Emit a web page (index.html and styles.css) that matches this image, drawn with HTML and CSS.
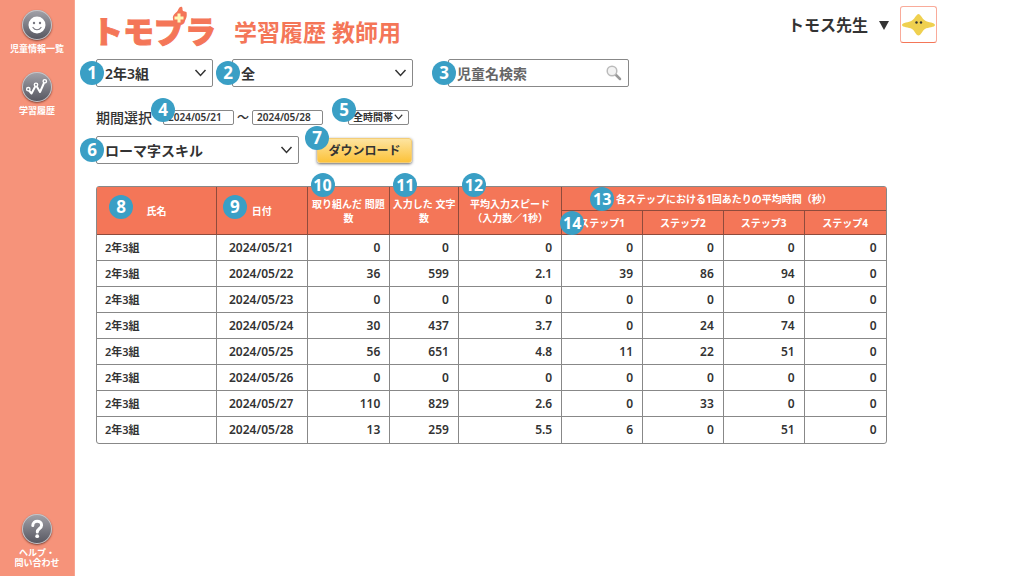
FILE: index.html
```html
<!DOCTYPE html>
<html lang="ja">

<head>
    <meta charset="utf-8">
    <title>トモプラ 学習履歴 教師用</title>
    <link rel="stylesheet" href="styles.css">
</head>

<body>
    <nav class="sidebar">
        <div class="menu">
            <a href="#" class="menu-item">
                <span class="menu-icon">
                    <svg width="30" height="30" viewBox="0 0 30 30">
                        <circle cx="15" cy="15" r="8.5" fill="#fff" />
                        <circle cx="12" cy="13" r="1.2" fill="#777780" />
                        <circle cx="18" cy="13" r="1.2" fill="#777780" />
                        <path d="M11 17.5c2 3 6 3 8 0" fill="none" stroke="#777780" stroke-width="1.2" stroke-linecap="round" />
                    </svg>
                </span>
                児童情報一覧
            </a>
            <a href="#" class="menu-item">
                <span class="menu-icon">
                    <svg width="30" height="30" viewBox="0 0 30 30" fill="none" stroke="#fff" stroke-width="1.4">
                        <path d="M7 18.5L9.5 21.5L13.2 14.5M14.8 14.5L18 20L22 11" stroke-width="2" stroke-linejoin="round" />
                        <circle cx="6.3" cy="17.2" r="1.7" />
                        <circle cx="14" cy="12.8" r="1.7" />
                        <circle cx="22.8" cy="9.3" r="1.7" />
                    </svg>
                </span>
                学習履歴
            </a>
        </div>
        <a href="#" class="menu-item menu-help">
            <span class="menu-icon">
                <svg width="30" height="30" viewBox="0 0 30 30">
                    <path d="M10.8 11.5c0-5.8 8.8-5.6 8.800-.3c0 3.300-4.300 3.300-4.300 6.800" fill="none" stroke="#fff" stroke-width="3" stroke-linecap="round" />
                    <circle cx="15.2" cy="22.2" r="1.9" fill="#fff" />
                </svg>
            </span>
            <span class="menu-line">ヘルプ・</span>
            <span class="menu-line">問い合わせ</span>
        </a>
    </nav>

    <main class="main">
        <header class="header">
            <div class="logo">トモプラ
                <svg class="logo-flame" width="16" height="20" viewBox="0 0 16 20">
                    <path d="M1 13C0 8 5 7 6 4C7 1 9 0 10 1C11 2 10 4 11 5L14.500 6C15.500 11 13.500 14 11.500 17C8 20 1 18 1 13Z" fill="#f47658" />
                    <path d="M5.500 7.500h3v3h3v3h-3v3h-3v-3h-3v-3h3Z" fill="#fff9b8" />
                </svg>
            </div>
            <h1 class="title">学習履歴 教師用</h1>
            <button type="button" class="user">トモス先生 <span class="user-arrow"></span></button>
            <a href="#" class="avatar" aria-label="プロフィール">
                <svg width="35" height="35" viewBox="0 0 35 35">
                    <path d="M17.500 7C19.500 7 20.500 11 24 13.500C27 15.500 34 15.500 34 18C34 20.500 27 20 24 22C21 24 20 28.500 17.500 28.500C15 28.500 14 24 11 22C8 20 1 20.500 1 18C1 15.500 8 15.500 11 13.500C14.500 11 15.500 7 17.500 7Z" fill="#efd04f" />
                    <circle cx="15.500" cy="15.500" r="1.200" fill="#333" />
                    <circle cx="20" cy="15.500" r="1.200" fill="#333" />
                </svg>
            </a>
        </header>

        <div class="row filters">
            <div class="field field-class">
                <select class="box" aria-label="クラス">
                    <option>2年3組</option>
                </select>
                <span class="badge">1</span>
            </div>
            <div class="field field-wide">
                <select class="box" aria-label="児童">
                    <option>全</option>
                </select>
                <span class="badge">2</span>
            </div>
            <div class="field field-wide field-search">
                <input type="search" class="box" placeholder="児童名検索" aria-label="児童名検索">
                <svg class="search-icon" width="16" height="16" viewBox="0 0 16 16" fill="none">
                    <path d="M9.500 9.500L14 14" stroke="#999" stroke-width="2.500" stroke-linecap="round" />
                    <circle cx="6" cy="6" r="4.800" fill="#f3f3f3" stroke="#bbb" stroke-width="1.500" />
                </svg>
                <span class="badge">3</span>
            </div>
        </div>

        <div class="row period">
            <label for="from">期間選択</label>
            <div class="field field-date">
                <input type="text" id="from" class="box box-small" value="2024/05/21">
                <span class="badge badge-raised">4</span>
            </div>
            <span class="tilde">～</span>
            <div class="field field-date">
                <input type="text" class="box box-small" value="2024/05/28" aria-label="終了日">
            </div>
            <div class="field field-time">
                <select class="box box-small" aria-label="時間帯">
                    <option>全時間帯</option>
                </select>
                <span class="badge badge-time">5</span>
            </div>
        </div>

        <div class="row skills">
            <div class="field field-skill">
                <select class="box" aria-label="スキル">
                    <option>ローマ字スキル</option>
                </select>
                <span class="badge">6</span>
            </div>
            <div class="field field-download">
                <button type="button" class="download">ダウンロード</button>
                <span class="badge badge-raised">7</span>
            </div>
        </div>

        <table class="history">
            <colgroup>
                <col class="col-name">
                <col class="col-date">
                <col class="col-count">
                <col class="col-chars">
                <col class="col-speed">
                <col class="col-step" span="4">
            </colgroup>
            <thead>
                <tr>
                    <th rowspan="2">氏名<span class="badge badge-inside">8</span></th>
                    <th rowspan="2">日付<span class="badge badge-inside-left">9</span></th>
                    <th rowspan="2">取り組んだ 問題数<span class="badge badge-top">10</span></th>
                    <th rowspan="2">入力した 文字数<span class="badge badge-top">11</span></th>
                    <th rowspan="2">平均入力スピード<br>（入力数／1秒）<span class="badge badge-top">12</span></th>
                    <th colspan="4">各ステップにおける1回あたりの平均時間（秒）<span class="badge badge-group">13</span></th>
                </tr>
                <tr>
                    <th>ステップ1<span class="badge badge-step">14</span></th>
                    <th>ステップ2</th>
                    <th>ステップ3</th>
                    <th>ステップ4</th>
                </tr>
            </thead>
            <tbody>
                <tr><td>2年3組</td><td>2024/05/21</td><td>0</td><td>0</td><td>0</td><td>0</td><td>0</td><td>0</td><td>0</td></tr>
                <tr><td>2年3組</td><td>2024/05/22</td><td>36</td><td>599</td><td>2.1</td><td>39</td><td>86</td><td>94</td><td>0</td></tr>
                <tr><td>2年3組</td><td>2024/05/23</td><td>0</td><td>0</td><td>0</td><td>0</td><td>0</td><td>0</td><td>0</td></tr>
                <tr><td>2年3組</td><td>2024/05/24</td><td>30</td><td>437</td><td>3.7</td><td>0</td><td>24</td><td>74</td><td>0</td></tr>
                <tr><td>2年3組</td><td>2024/05/25</td><td>56</td><td>651</td><td>4.8</td><td>11</td><td>22</td><td>51</td><td>0</td></tr>
                <tr><td>2年3組</td><td>2024/05/26</td><td>0</td><td>0</td><td>0</td><td>0</td><td>0</td><td>0</td><td>0</td></tr>
                <tr><td>2年3組</td><td>2024/05/27</td><td>110</td><td>829</td><td>2.6</td><td>0</td><td>33</td><td>0</td><td>0</td></tr>
                <tr><td>2年3組</td><td>2024/05/28</td><td>13</td><td>259</td><td>5.5</td><td>6</td><td>0</td><td>51</td><td>0</td></tr>
            </tbody>
        </table>
    </main>
</body>

</html>
```

FILE: styles.css
```css
* {
    box-sizing: border-box;
}

body {
    display: flex;
    min-height: 100vh;
    margin: 0;
    background: #fff;
    color: #333;
    font-family: "Noto Sans", "Noto Sans CJK JP", sans-serif;
    font-size: 14px;
    font-weight: 600;
}

button,
input,
select {
    font-family: inherit;
    font-weight: inherit;
    color: inherit;
}

/* サイドバー */
.sidebar {
    display: flex;
    flex-direction: column;
    justify-content: space-between;
    flex: 0 0 75px;
    padding: 10px 0 8px;
    background: #f6937a;
    border-right: 1px solid #f8a48f;
}

.menu {
    display: flex;
    flex-direction: column;
    gap: 18px;
}

.menu-item {
    display: block;
    color: #fff;
    font-size: 9px;
    font-weight: 700;
    line-height: 10px;
    text-align: center;
    text-decoration: none;
    white-space: nowrap;
}

.menu-help {
    font-family: "Noto Sans CJK JP", sans-serif;
}

.menu-line {
    display: block;
}

.menu-icon {
    display: block;
    width: 30px;
    height: 30px;
    margin: 0 auto 4px;
    border-radius: 50%;
    background: linear-gradient(#a3a3aa, #55555f);
    box-shadow: inset 0 0 0 1px #c9c4c6, 0 1px 2px rgba(80, 30, 20, .7);
}

/* ヘッダー */
.main {
    flex: 1;
    min-width: 0;
    padding: 6px 87px 20px 21px;
}

.header {
    display: flex;
    align-items: flex-start;
    height: 45px;
}

.logo {
    position: relative;
    margin: 6px 0 0 -4px;
    color: #f47658;
    font-family: "Noto Sans CJK JP", sans-serif;
    font-size: 31px;
    font-weight: 900;
    line-height: 36px;
    white-space: nowrap;
    -webkit-text-stroke: 1px #f47658;
}

.logo-flame {
    position: absolute;
    top: -6px;
    left: 80px;
}

.title {
    margin: 7px 0 0 18px;
    color: #f47658;
    font-size: 23px;
    font-weight: 700;
    line-height: 38px;
    white-space: nowrap;
}

.user {
    display: flex;
    align-items: center;
    gap: 11px;
    margin-left: auto;
    padding: 0;
    border: 0;
    background: none;
    font-size: 16px;
    line-height: 38px;
    white-space: nowrap;
}

.user-arrow {
    border: 5px solid transparent;
    border-top: 9px solid #333;
    border-bottom: 0;
}

.avatar {
    height: 37px;
    margin-left: 11px;
    border: 1px solid #f9ab9a;
    border-bottom-color: #f47658;
    border-radius: 3px;
}

.avatar svg {
    display: block;
}

/* 検索条件 */
.row {
    display: flex;
    align-items: center;
}

.filters {
    gap: 19px;
    margin-top: 8px;
}

.field {
    position: relative;
}

.field-class {
    width: 117px;
}

.field-wide {
    width: 181px;
}

.field-search {
    margin-left: 16px;
}

.box {
    display: block;
    width: 100%;
    height: 28px;
    margin: 0;
    padding: 0 8px;
    border: 1px solid #888;
    border-radius: 2px;
    outline: 0;
    background: #fff;
    font-size: 14px;
    -webkit-appearance: none;
    appearance: none;
}

.box::placeholder {
    color: #666;
    opacity: 1;
}

select.box {
    background: #fff url("data:image/svg+xml,%3Csvg xmlns='http://www.w3.org/2000/svg' viewBox='0 0 12 8'%3E%3Cpath d='M1 1l5 5.500l5-5.500' fill='none' stroke='%23333' stroke-width='1.500'/%3E%3C/svg%3E") no-repeat right 5px center / 13px 8px;
}

.search-icon {
    position: absolute;
    top: 6px;
    right: 7px;
}

.period {
    height: 20px;
    margin-top: 20px;
    font-weight: 500;
}

.field-date {
    width: 71px;
}

.period label {
    margin-right: 11px;
}

.tilde {
    width: 18px;
    font-size: 12px;
    text-align: center;
}

.field-time {
    width: 61px;
    margin-left: 25px;
}

.box-small {
    height: 15px;
    padding: 0 4px;
    font-size: 10px;
    font-weight: 600;
    line-height: 13px;
}

select.box-small {
    background-size: 9px 6px;
}

.skills {
    gap: 18px;
    margin-top: 9px;
}

.field-skill {
    width: 203px;
}

.download {
    display: block;
    width: 95px;
    height: 25px;
    padding: 0;
    border: 1px solid #f3cd77;
    border-radius: 3px;
    background: linear-gradient(#fde4a0, #fcc23a);
    box-shadow: 0 1px 3px rgba(0, 0, 0, .6);
    font-size: 12px;
}

/* 番号 */
.badge {
    position: absolute;
    top: 2px;
    left: -16px;
    width: 24px;
    height: 24px;
    border-radius: 50%;
    background: #3a9fc5;
    color: #fff;
    font-size: 17px;
    font-weight: 700;
    line-height: 24px;
    text-align: center;
}

.badge-raised {
    top: -12px;
    left: -12px;
}

.badge-time {
    top: -12px;
}

/* 学習履歴の表 */
.history {
    width: 94%;
    margin-top: 22px;
    border: 1px solid #888;
    border-radius: 3px;
    border-spacing: 0;
    table-layout: fixed;
}

.col-name {
    width: 15.2%;
}

.col-date {
    width: 11.5%;
}

.col-count {
    width: 10.5%;
}

.col-chars {
    width: 8.7%;
}

.col-speed {
    width: 13.1%;
}

.col-step {
    width: 10.25%;
}

.history th {
    position: relative;
    height: 24px;
    padding: 0;
    border-right: 1px solid #8f4b3c;
    border-bottom: 1px solid #8f4b3c;
    background: #f47658;
    color: #fff;
    font-size: 10px;
    font-weight: 700;
    line-height: 14px;
}

.history td {
    height: 26px;
    padding: 0 9px 0 8px;
    border-right: 1px solid #888;
    border-bottom: 1px solid #888;
    font-size: 12px;
    line-height: 14px;
    text-align: right;
}

.history td:nth-child(1) {
    font-size: 11px;
    text-align: left;
}

.history td:nth-child(2) {
    text-align: center;
}

.history td:last-child,
.history tr:first-child th:last-child,
.history tr:last-child th:last-child {
    border-right: 0;
}

.history tbody tr:last-child td {
    border-bottom: 0;
}

.history .badge {
    font-size: 16px;
}

.history .badge-inside {
    top: 8px;
    left: 12px;
    font-size: 17px;
}

.history .badge-inside-left {
    top: 8px;
    left: 6px;
    font-size: 17px;
}

.badge-top {
    top: -14px;
    left: 3px;
}

.badge-group {
    top: 0;
    left: 28px;
}

.badge-step {
    top: 0;
    left: -2px;
}
```
